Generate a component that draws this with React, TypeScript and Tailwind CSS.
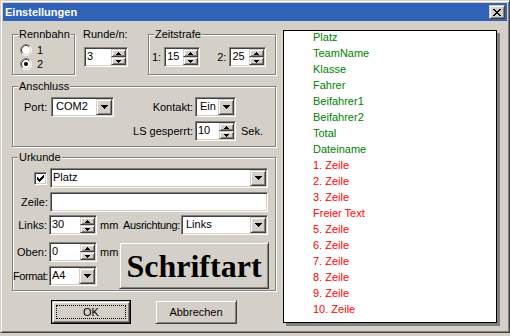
import React from "react";

const sunken =
  "border border-t-[#808080] border-l-[#808080] border-b-white border-r-white shadow-[inset_1px_1px_0_#404040,inset_-1px_-1px_0_#d4d0c8]";
const raised =
  "border border-t-[#d4d0c8] border-l-[#d4d0c8] border-b-[#404040] border-r-[#404040] shadow-[inset_1px_1px_0_#fff,inset_-1px_-1px_0_#808080] bg-[#d4d0c8]";

function Arrow7() {
  return (
    <svg width="7" height="4" viewBox="0 0 7 4" shapeRendering="crispEdges">
      <rect x="0" y="0" width="7" height="1" fill="#000" />
      <rect x="1" y="1" width="5" height="1" fill="#000" />
      <rect x="2" y="2" width="3" height="1" fill="#000" />
      <rect x="3" y="3" width="1" height="1" fill="#000" />
    </svg>
  );
}

function Arrow5({ up }: { up?: boolean }) {
  return (
    <svg width="5" height="3" viewBox="0 0 5 3" shapeRendering="crispEdges">
      {up ? (
        <>
          <rect x="2" y="0" width="1" height="1" fill="#000" />
          <rect x="1" y="1" width="3" height="1" fill="#000" />
          <rect x="0" y="2" width="5" height="1" fill="#000" />
        </>
      ) : (
        <>
          <rect x="0" y="0" width="5" height="1" fill="#000" />
          <rect x="1" y="1" width="3" height="1" fill="#000" />
          <rect x="2" y="2" width="1" height="1" fill="#000" />
        </>
      )}
    </svg>
  );
}

function SpinBtn({ up }: { up?: boolean }) {
  return (
    <div className={`flex-1 flex items-center justify-center ${raised}`}>
      <Arrow5 up={up} />
    </div>
  );
}

function Spinner({ value, className }: { value: string; className: string }) {
  return (
    <div className={`${sunken} bg-white flex h-[20px] p-[1px] shrink-0 ${className}`}>
      <div className="flex-1 pl-[1px] leading-[14px]">{value}</div>
      <div className="w-[15px] flex flex-col">
        <SpinBtn up />
        <SpinBtn />
      </div>
    </div>
  );
}

function Combo({
  value,
  className,
  textClass,
}: {
  value: string;
  className: string;
  textClass: string;
}) {
  return (
    <div className={`${sunken} bg-white flex h-[20px] p-[1px] shrink-0 ${className}`}>
      <div className={`flex-1 leading-[15px] ${textClass}`}>{value}</div>
      <div className={`w-[16px] flex items-center justify-center ${raised}`}>
        <Arrow7 />
      </div>
    </div>
  );
}

function Group({
  label,
  className,
  children,
}: {
  label: string;
  className: string;
  children?: React.ReactNode;
}) {
  return (
    <div
      className={`relative shrink-0 border border-[#808080] shadow-[inset_1px_1px_0_#fff,1px_1px_0_#fff] ${className}`}
    >
      <span className="absolute left-[5px] -top-[7px] bg-[#d4d0c8] px-[1px] leading-[13px] whitespace-nowrap">
        {label}
      </span>
      {children}
    </div>
  );
}

function Radio({ checked }: { checked?: boolean }) {
  return (
    <svg width="12" height="12" viewBox="0 0 12 12" className="shrink-0">
      <circle cx="6" cy="6" r="5" fill="#fff" />
      <path d="M2.11 9.89 A5.5 5.5 0 0 1 9.89 2.11" stroke="#808080" fill="none" strokeWidth="1" />
      <path d="M9.89 2.11 A5.5 5.5 0 0 1 2.11 9.89" stroke="#fff" fill="none" strokeWidth="1" />
      <path d="M2.82 9.18 A4.5 4.5 0 0 1 9.18 2.82" stroke="#404040" fill="none" strokeWidth="1" />
      <path d="M9.18 2.82 A4.5 4.5 0 0 1 2.82 9.18" stroke="#d4d0c8" fill="none" strokeWidth="1" />
      {checked && <circle cx="6" cy="6" r="2" fill="#000" />}
    </svg>
  );
}

function Checkbox() {
  return (
    <div className={`${sunken} bg-white w-[13px] h-[13px] shrink-0 relative`}>
      <svg
        width="7"
        height="7"
        viewBox="0 0 7 7"
        shapeRendering="crispEdges"
        className="absolute left-[2px] top-[2px]"
      >
        <rect x="6" y="0" width="1" height="1" fill="#000" />
        <rect x="5" y="1" width="2" height="1" fill="#000" />
        <rect x="0" y="2" width="1" height="1" fill="#000" />
        <rect x="4" y="2" width="3" height="1" fill="#000" />
        <rect x="0" y="3" width="2" height="1" fill="#000" />
        <rect x="3" y="3" width="3" height="1" fill="#000" />
        <rect x="0" y="4" width="5" height="1" fill="#000" />
        <rect x="1" y="5" width="3" height="1" fill="#000" />
        <rect x="2" y="6" width="1" height="1" fill="#000" />
      </svg>
    </div>
  );
}

function CloseBtn() {
  const px: [number, number, number][] = [
    [0, 0, 2],
    [6, 0, 2],
    [1, 1, 2],
    [5, 1, 2],
    [2, 2, 4],
    [3, 3, 2],
    [2, 4, 4],
    [1, 5, 2],
    [5, 5, 2],
    [0, 6, 2],
    [6, 6, 2],
  ];
  return (
    <div className={`w-[16px] h-[14px] flex items-center justify-center ${raised}`}>
      <svg width="8" height="7" viewBox="0 0 8 7" shapeRendering="crispEdges">
        {px.map(([x, y, w], i) => (
          <rect key={i} x={x} y={y} width={w} height="1" fill="#000" />
        ))}
      </svg>
    </div>
  );
}

const green = ["Platz", "TeamName", "Klasse", "Fahrer", "Beifahrer1", "Beifahrer2", "Total", "Dateiname"];
const red = [
  "1. Zeile",
  "2. Zeile",
  "3. Zeile",
  "Freier Text",
  "5. Zeile",
  "6. Zeile",
  "7. Zeile",
  "8. Zeile",
  "9. Zeile",
  "10. Zeile",
];

export default function App() {
  return (
    <div className="w-[510px] h-[336px] bg-[#d4d0c8] text-[11px] text-black font-['Liberation_Sans',Arial,sans-serif]">
      <div className="w-[510px] h-[333px] border border-t-[#d4d0c8] border-l-[#d4d0c8] border-r-[#404040] border-b-[#404040] shadow-[inset_1px_1px_0_#fff,inset_-1px_-1px_0_#808080] p-[2px] flex flex-col">
        {/* Title bar */}
        <div className="h-[18px] bg-[#3063b7] flex items-center justify-between pl-[2px] pr-[2px] shrink-0">
          <span className="text-white font-bold text-[11px] leading-[13px]">Einstellungen</span>
          <CloseBtn />
        </div>

        {/* Client */}
        <div className="flex pl-[9px] pt-[7px]">
          {/* Left column */}
          <div className="w-[264px] flex flex-col shrink-0">
            {/* Row 1 */}
            <div className="flex items-start h-[47px]">
              <Group label="Rennbahn" className="mt-[6px] w-[63px] h-[41px]">
                <div className="pt-[8px] pl-[7px] flex flex-col">
                  <div className="h-[14px] flex items-center">
                    <Radio />
                    <span className="ml-[5px] leading-[13px]">1</span>
                  </div>
                  <div className="h-[14px] flex items-center">
                    <Radio checked />
                    <span className="ml-[5px] leading-[13px]">2</span>
                  </div>
                </div>
              </Group>
              <div className="ml-[8px] w-[46px] flex flex-col shrink-0">
                <span className="h-[13px] leading-[13px] whitespace-nowrap">Runde/n:</span>
                <Spinner value="3" className="mt-[6px] ml-[1px] w-[44px]" />
              </div>
              <Group label="Zeitstrafe" className="ml-[19px] mt-[6px] w-[128px] h-[41px]">
                <div className="mt-[12px] pl-[3px] flex items-center">
                  <span>1:</span>
                  <Spinner value="15" className="ml-[3px] w-[36px]" />
                  <span className="ml-[17px]">2:</span>
                  <Spinner value="25" className="ml-[3px] w-[37px]" />
                </div>
              </Group>
            </div>

            {/* Anschluss */}
            <Group label="Anschluss" className="mt-[11px] h-[61px] w-[264px]">
              <div className="flex items-center pl-[11px] mt-[10px] h-[20px]">
                <span className="w-[27px] shrink-0">Port:</span>
                <Combo value="COM2" className="w-[63px]" textClass="pl-[3px]" />
                <span className="w-[79px] text-right shrink-0">Kontakt:</span>
                <Combo value="Ein" className="ml-[2px] w-[41px]" textClass="pl-[3px]" />
              </div>
              <div className="flex items-center pl-[11px] mt-[4px] h-[20px]">
                <span className="w-[90px] shrink-0" />
                <span className="w-[79px] text-right shrink-0 whitespace-nowrap">LS gesperrt:</span>
                <Spinner value="10" className="ml-[2px] w-[41px]" />
                <span className="ml-[5px]">Sek.</span>
              </div>
            </Group>

            {/* Urkunde */}
            <Group label="Urkunde" className="mt-[10px] h-[134px] w-[264px]">
              <div className="flex items-center pl-[21px] mt-[10px] h-[20px]">
                <Checkbox />
                <Combo value="Platz" className="ml-[3px] w-[218px]" textClass="pl-[1px]" />
              </div>
              <div className="flex items-center mt-[4px] h-[20px]">
                <span className="w-[35px] flex justify-end shrink-0 whitespace-nowrap">Zeile:</span>
                <div className={`${sunken} bg-white ml-[2px] w-[218px] h-[20px]`} />
              </div>
              <div className="flex items-center mt-[3px] h-[20px]">
                <span className="w-[34px] flex justify-end shrink-0 whitespace-nowrap">Links:</span>
                <Spinner value="30" className="ml-[2px] w-[48px]" />
                <span className="ml-[3px] w-[19px] shrink-0">mm</span>
                <span className="w-[61px] flex justify-end shrink-0 whitespace-nowrap tracking-[-0.35px]">
                  Ausrichtung:
                </span>
                <Combo value="Links" className="ml-[1px] w-[87px]" textClass="pl-[3px]" />
              </div>
              <div className="flex mt-[7px]">
                <div className="w-[106px] flex flex-col shrink-0">
                  <div className="flex items-center h-[20px]">
                    <span className="w-[34px] flex justify-end shrink-0 whitespace-nowrap">Oben:</span>
                    <Spinner value="0" className="ml-[2px] w-[48px]" />
                    <span className="ml-[3px]">mm</span>
                  </div>
                  <div className="flex items-center h-[20px] mt-[4px]">
                    <span className="w-[35px] flex justify-end shrink-0 whitespace-nowrap tracking-[-0.4px]">
                      Format:
                    </span>
                    <Combo value="A4" className="ml-[1px] w-[48px]" textClass="pl-[1px]" />
                  </div>
                </div>
                <div
                  className={`w-[150px] h-[47px] flex items-center justify-center ${raised}`}
                >
                  <span className="font-['Liberation_Serif','Times_New_Roman',serif] font-bold text-[32px] leading-[36px]">
                    Schriftart
                  </span>
                </div>
              </div>
            </Group>

            {/* Buttons */}
            <div className="flex mt-[9px] pl-[39px]">
              <div className="w-[80px] h-[24px] border border-black">
                <div className={`w-full h-full p-[3px] ${raised}`}>
                  <div className="w-full h-full border border-dotted border-black flex items-center justify-center leading-[13px]">
                    OK
                  </div>
                </div>
              </div>
              <div
                className={`ml-[24px] w-[82px] h-[24px] flex items-center justify-center leading-[13px] ${raised}`}
              >
                Abbrechen
              </div>
            </div>
          </div>

          {/* List box */}
          <div className="ml-[7px] mt-[2px] w-[214px] h-[293px] shrink-0 bg-white border border-black shadow-[3px_3px_0_#808080] pl-[29px] flex flex-col gap-[3px]">
            {green.map((t) => (
              <div key={t} className="leading-[13px] text-[#008000]">
                {t}
              </div>
            ))}
            {red.map((t) => (
              <div key={t} className="leading-[13px] text-[#ff0000]">
                {t}
              </div>
            ))}
          </div>
        </div>
      </div>
    </div>
  );
}
